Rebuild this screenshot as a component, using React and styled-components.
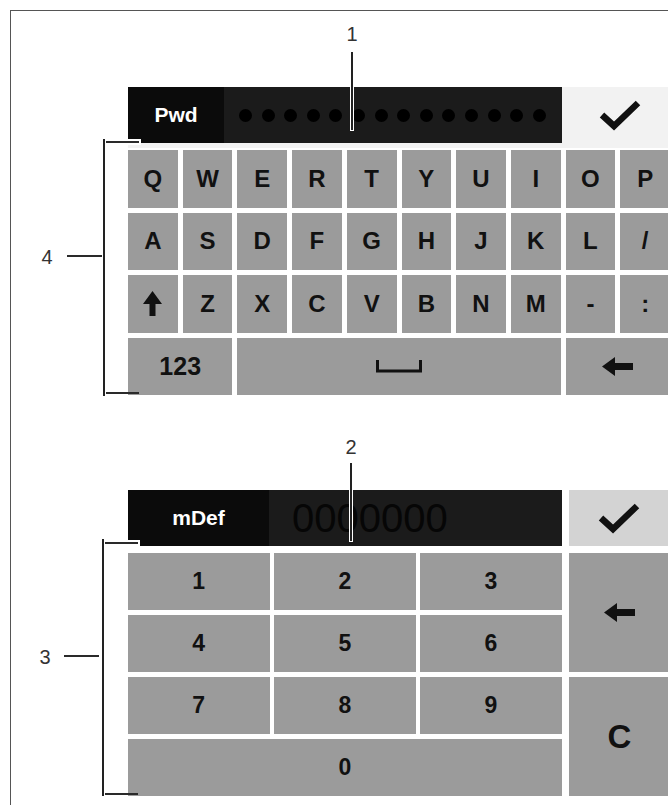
import React from "react";
import styled, { createGlobalStyle } from "styled-components";

const GlobalStyle = createGlobalStyle`
  html, body {
    margin: 0;
    padding: 0;
    background: #fff;
    overflow: hidden;
  }
  body {
    font-family: "Liberation Sans", Arial, sans-serif;
  }
`;

const Frame = styled.div`
  margin: 10px 0 0 10px;
  border-top: 1px solid #555;
  border-left: 1px solid #555;
  width: 658px;
  height: 795px;
  box-sizing: border-box;
  padding: 76px 0 0 117px;
  display: flex;
  flex-direction: column;
  gap: 95px;
  overflow: hidden;
`;

const Section = styled.section`
  position: relative;
  width: 542px;
  flex: none;
`;

const HeaderBar = styled.div`
  display: grid;
  grid-template-columns: ${p => p.$cols};
  height: 56px;
  background: ${p => p.$bg};
  padding-bottom: ${p => p.$strip}px;
  margin-bottom: ${p => p.$space}px;
`;

const Tag = styled.div`
  background: #0b0b0b;
  color: #fff;
  font-weight: bold;
  font-size: 21px;
  display: flex;
  align-items: center;
  justify-content: center;
`;

const Field = styled.div`
  background: #1b1b1b;
  display: flex;
  align-items: center;
  gap: 9.6px;
  padding-left: ${p => p.$indent}px;
  overflow: hidden;
`;

const Dot = styled.span`
  width: 13px;
  height: 13px;
  border-radius: 50%;
  background: #000;
  flex: none;
`;

const Value = styled.span`
  font-size: 40px;
  color: #060606;
`;

const Confirm = styled.div`
  background: ${p => p.$bg};
  margin-left: ${p => p.$inset || 0}px;
  padding-left: ${p => p.$shift || 0}px;
  display: flex;
  align-items: center;
  justify-content: center;
`;

const LetterGrid = styled.div`
  display: grid;
  grid-template-columns: repeat(10, 1fr);
  grid-auto-rows: 57.5px;
  gap: 5px;
`;

const NumGrid = styled.div`
  display: grid;
  grid-template-columns: repeat(3, 141.5px) 1fr;
  grid-auto-rows: 57px;
  column-gap: 4.6px;
  row-gap: 5px;
`;

const Key = styled.div`
  background: #9b9b9b;
  color: #111;
  font-weight: bold;
  font-size: ${p => p.$size || 24}px;
  display: flex;
  align-items: center;
  justify-content: center;
  grid-column: ${p => p.$col || "auto"} / span ${p => p.$span || 1};
  grid-row: ${p => p.$row || "auto"} / span ${p => p.$rows || 1};
  margin-left: ${p => p.$nudge || 0}px;
`;

const Callout = styled.span`
  position: absolute;
  left: ${p => p.$x}px;
  top: ${p => p.$y}px;
  transform: translateX(-50%);
  font-size: 20px;
  line-height: 20px;
  color: #333;
`;

const VLine = styled.span`
  position: absolute;
  left: ${p => p.$x}px;
  top: ${p => p.$y}px;
  width: 2px;
  height: ${p => p.$len}px;
  background: #222;
  box-shadow: ${p => (p.$halo ? "0 0 0 1px #fff" : "none")};
`;

const HLine = styled.span`
  position: absolute;
  left: ${p => p.$x}px;
  top: ${p => p.$y}px;
  height: 2px;
  width: ${p => p.$len}px;
  background: #2a2a2a;
  box-shadow: ${p => (p.$halo ? "0 0 0 2px #fff" : "none")};
`;

const Check = () => (
  <svg width="44" height="34" viewBox="0 0 44 34">
    <polyline points="4,17 16,28 40,5" fill="none" stroke="#111" strokeWidth="6.5" />
  </svg>
);

const BackArrow = () => (
  <svg width="31" height="19" viewBox="0 0 31 19">
    <polygon points="0,9.5 13,0 13,6 31,6 31,13 13,13 13,19" fill="#111" />
  </svg>
);

const ShiftArrow = () => (
  <svg width="19" height="25" viewBox="0 0 19 25">
    <polygon points="9.5,0 19,13 12.5,13 12.5,25 6.5,25 6.5,13 0,13" fill="#111" />
  </svg>
);

const SpaceMark = () => (
  <svg width="46" height="13" viewBox="0 0 46 13">
    <path d="M1.5 0 V11 H44.5 V0" fill="none" stroke="#111" strokeWidth="3" />
  </svg>
);

const rows = [
  ["Q", "W", "E", "R", "T", "Y", "U", "I", "O", "P"],
  ["A", "S", "D", "F", "G", "H", "J", "K", "L", "/"],
  ["shift", "Z", "X", "C", "V", "B", "N", "M", "-", ":"],
];

export default function App() {
  return (
    <>
      <GlobalStyle />
      <Frame>
        <Section>
          <HeaderBar $cols="96px 337.7px 1fr" $bg="#f2f2f2" $strip={5} $space={2}>
            <Tag>Pwd</Tag>
            <Field $indent={15}>
              {Array.from({ length: 14 }).map((_, i) => (
                <Dot key={i} />
              ))}
            </Field>
            <Confirm $bg="#f2f2f2" $shift={8}>
              <Check />
            </Confirm>
          </HeaderBar>
          <LetterGrid>
            {rows.flat().map((k, i) => (
              <Key key={i}>{k === "shift" ? <ShiftArrow /> : k}</Key>
            ))}
            <Key $span={2} $size={25}>123</Key>
            <Key $span={6}>
              <SpaceMark />
            </Key>
            <Key $span={2}>
              <BackArrow />
            </Key>
          </LetterGrid>

          <Callout $x={224} $y={-63}>1</Callout>
          <VLine $x={223} $y={-35} $len={78} $halo />
          <HLine $x={-22} $y={54} $len={33} $halo />
          <HLine $x={-22} $y={305} $len={33} />
          <VLine $x={-25} $y={52} $len={257} />
          <Callout $x={-81} $y={160}>4</Callout>
          <HLine $x={-61} $y={168} $len={35} />
        </Section>

        <Section>
          <HeaderBar $cols="141px 292.7px 1fr" $bg="#fff" $strip={0} $space={7}>
            <Tag>mDef</Tag>
            <Field $indent={23}>
              <Value>0000000</Value>
            </Field>
            <Confirm $bg="#d3d3d3" $inset={7}>
              <Check />
            </Confirm>
          </HeaderBar>
          <NumGrid>
            <Key $size={23}>1</Key>
            <Key $size={23}>2</Key>
            <Key $size={23}>3</Key>
            <Key $col={4} $row={1} $rows={2} $nudge={2.4}>
              <BackArrow />
            </Key>
            <Key $size={23}>4</Key>
            <Key $size={23}>5</Key>
            <Key $size={23}>6</Key>
            <Key $size={23}>7</Key>
            <Key $size={23}>8</Key>
            <Key $size={23}>9</Key>
            <Key $col={4} $row={3} $rows={2} $nudge={2.4} $size={33}>C</Key>
            <Key $col={1} $row={4} $span={3} $size={23}>0</Key>
          </NumGrid>

          <Callout $x={223} $y={-53}>2</Callout>
          <VLine $x={222} $y={-27} $len={78} $halo />
          <HLine $x={-23} $y={52} $len={33} $halo />
          <HLine $x={-23} $y={303} $len={33} />
          <VLine $x={-26} $y={49} $len={257} />
          <Callout $x={-83} $y={157}>3</Callout>
          <HLine $x={-64} $y={165} $len={35} />
        </Section>
      </Frame>
    </>
  );
}
